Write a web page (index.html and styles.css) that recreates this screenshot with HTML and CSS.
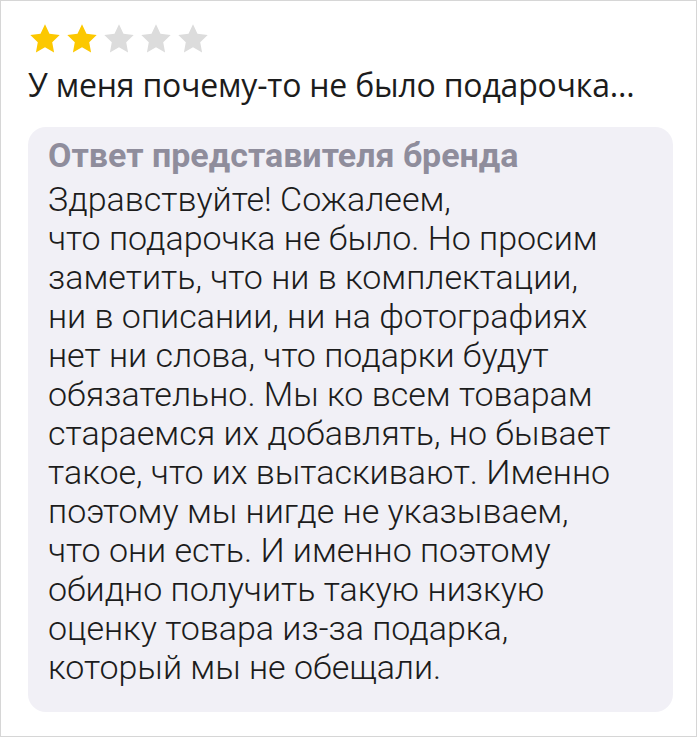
FILE: index.html
```html
<!DOCTYPE html>
<html lang="ru">
<head>
<meta charset="utf-8">
<link rel="stylesheet" href="styles.css">
</head>
<body>
<div class="frame">
  <div class="stars">
    <svg class="star on" viewBox="1.6 1.6 20.8 20.8"><path d="M12 1.8l3.1 6.6 7.1.9-5.2 4.9 1.3 7.1L12 17.8l-6.3 3.5 1.3-7.1L1.8 9.3l7.1-.9z"/></svg>
    <svg class="star on" viewBox="1.6 1.6 20.8 20.8"><path d="M12 1.8l3.1 6.6 7.1.9-5.2 4.9 1.3 7.1L12 17.8l-6.3 3.5 1.3-7.1L1.8 9.3l7.1-.9z"/></svg>
    <svg class="star" viewBox="1.6 1.6 20.8 20.8"><path d="M12 1.8l3.1 6.6 7.1.9-5.2 4.9 1.3 7.1L12 17.8l-6.3 3.5 1.3-7.1L1.8 9.3l7.1-.9z"/></svg>
    <svg class="star" viewBox="1.6 1.6 20.8 20.8"><path d="M12 1.8l3.1 6.6 7.1.9-5.2 4.9 1.3 7.1L12 17.8l-6.3 3.5 1.3-7.1L1.8 9.3l7.1-.9z"/></svg>
    <svg class="star" viewBox="1.6 1.6 20.8 20.8"><path d="M12 1.8l3.1 6.6 7.1.9-5.2 4.9 1.3 7.1L12 17.8l-6.3 3.5 1.3-7.1L1.8 9.3l7.1-.9z"/></svg>
  </div>
  <p class="review">У меня почему-то не было подарочка...</p>
  <div class="answer">
    <h3 class="answer-title">Ответ представителя бренда</h3>
    <p class="answer-text">Здравствуйте! Сожалеем,<br>что подарочка не было. Но просим<br>заметить, что ни в комплектации,<br>ни в описании, ни на фотографиях<br>нет ни слова, что подарки будут<br>обязательно. Мы ко всем товарам<br>стараемся их добавлять, но бывает<br>такое, что их вытаскивают. Именно<br>поэтому мы нигде не указываем,<br>что они есть. И именно поэтому<br>обидно получить такую низкую<br>оценку товара из-за подарка,<br>который мы не обещали.</p>
  </div>
</div>
</body>
</html>
```
FILE: styles.css
```css
html, body {
  margin: 0;
  padding: 0;
  background: #fff;
}
.frame {
  box-sizing: border-box;
  width: 697px;
  height: 737px;
  border: 1px solid #d6d6d6;
  padding: 23px 23px 0 27px;
  display: flex;
  flex-direction: column;
}
.stars {
  display: flex;
  gap: 7px;
  margin-left: 2px;
}
.star {
  width: 30px;
  height: 30px;
  fill: #dcdcdc;
}
.star.on {
  fill: #fcc800;
}
.review {
  margin: 11px 0 0 0;
  font-family: "Open Sans", "Noto Sans", sans-serif;
  font-size: 32px;
  line-height: 40px;
  color: #1c1c1c;
  letter-spacing: -0.2px;
}
.answer {
  margin-top: 22px;
  background: #f1f0f6;
  border-radius: 18px;
  padding: 10px 20px 25px 20px;
}
.answer-title {
  margin: 0;
  font-family: Roboto, sans-serif;
  font-weight: 700;
  font-size: 34px;
  line-height: 36px;
  color: #8f8d9c;
}
.answer-text {
  margin: 7px 0 0 0;
  font-family: Roboto, sans-serif;
  font-weight: 300;
  font-size: 34px;
  line-height: 39px;
  color: #1c1c1c;
}
```
